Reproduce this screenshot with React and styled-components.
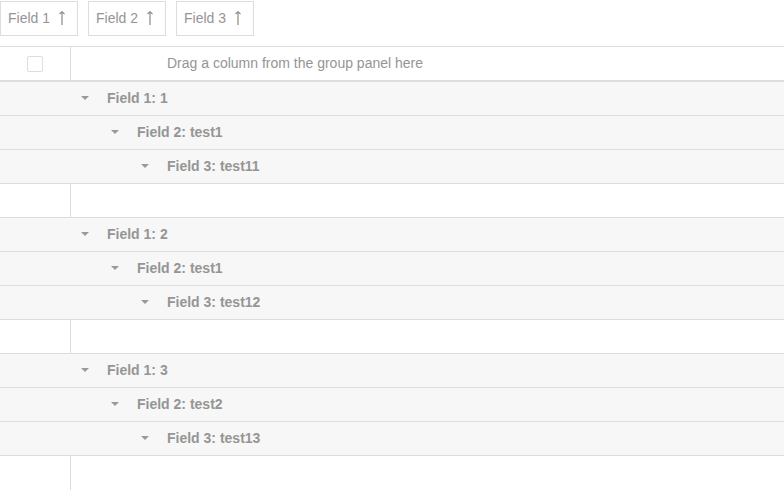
import styled, { createGlobalStyle } from 'styled-components'

const Global = createGlobalStyle`
  body {
    margin: 0;
    background: #fff;
    font-family: "Liberation Sans", Arial, sans-serif;
    font-size: 14px;
    color: #959595;
  }
`;

const GroupPanel = styled.div`
  display: flex;
  gap: 10px;
  height: 46px;
  padding-top: 1px;
  box-sizing: border-box;
`;

const GroupChip = styled.div`
  display: flex;
  align-items: center;
  gap: 8px;
  width: 78px;
  height: 35px;
  box-sizing: border-box;
  padding: 0 0 2px 7px;
  border: 1px solid #ddd;
  color: #959595;
`;

const Grid = styled.div`
  border-top: 1px solid #ddd;
`;

const HeaderRow = styled.div`
  display: flex;
  height: 33px;
  border-bottom: 2px solid #ddd;
`;

const SelectCell = styled.div`
  width: 70px;
  flex: none;
  border-right: 1px solid #ddd;
  display: flex;
  align-items: center;
  justify-content: center;
`;

const CheckBox = styled.div`
  width: 14px;
  height: 14px;
  border: 1px solid #ddd;
  border-radius: 2px;
`;

const HeaderText = styled.div`
  display: flex;
  align-items: center;
  padding: 0 0 2px 96px;
  color: #959595;
`;

const GroupRow = styled.div`
  display: flex;
  align-items: center;
  height: 33px;
  box-sizing: border-box;
  padding-bottom: 2px;
  background: #f7f7f7;
  border-bottom: 1px solid #ddd;
  padding-left: ${p => 70 + p.$level * 30}px;
  height: 34px;
`;

const Caret = styled.div`
  width: 30px;
  display: flex;
  justify-content: center;
  align-items: center;
`;

const GroupLabel = styled.span`
  padding-left: 7px;
  font-weight: bold;
  color: #959595;
`;

const DataRow = styled.div`
  display: flex;
  height: 33px;
  border-bottom: 1px solid #ddd;
  background: #fff;
`;

const LastRow = styled(DataRow)`
  height: 34px;
  border-bottom: none;
`;

function UpArrow() {
  return (
    <svg width="8" height="14" viewBox="0 0 8 14">
      <path d="M4 1 V14" stroke="#888" strokeWidth="1.2" />
      <path d="M1.5 3 L4 0.8 L6.5 3" stroke="#888" strokeWidth="1.1" fill="none" />
    </svg>
  );
}

function DownCaret() {
  return (
    <svg width="8" height="4" viewBox="0 0 8 4">
      <path d="M0 0 H8 L4 4 Z" fill="#999" />
    </svg>
  );
}

const groups = [
  ['1', 'test1', 'test11'],
  ['2', 'test1', 'test12'],
  ['3', 'test2', 'test13'],
];

export default function App() {
  return (
    <>
      <Global />
      <GroupPanel>
        {['Field 1', 'Field 2', 'Field 3'].map(f => (
          <GroupChip key={f}>{f}<UpArrow /></GroupChip>
        ))}
      </GroupPanel>
      <Grid>
        <HeaderRow>
          <SelectCell><CheckBox /></SelectCell>
          <HeaderText>Drag a column from the group panel here</HeaderText>
        </HeaderRow>
        {groups.map(([a, b, c], i) => {
          const Row = i === groups.length - 1 ? LastRow : DataRow;
          return (
            <div key={a}>
              {[`Field 1: ${a}`, `Field 2: ${b}`, `Field 3: ${c}`].map((label, lvl) => (
                <GroupRow key={label} $level={lvl}>
                  <Caret><DownCaret /></Caret>
                  <GroupLabel>{label}</GroupLabel>
                </GroupRow>
              ))}
              <Row><SelectCell /></Row>
            </div>
          );
        })}
      </Grid>
    </>
  );
}
